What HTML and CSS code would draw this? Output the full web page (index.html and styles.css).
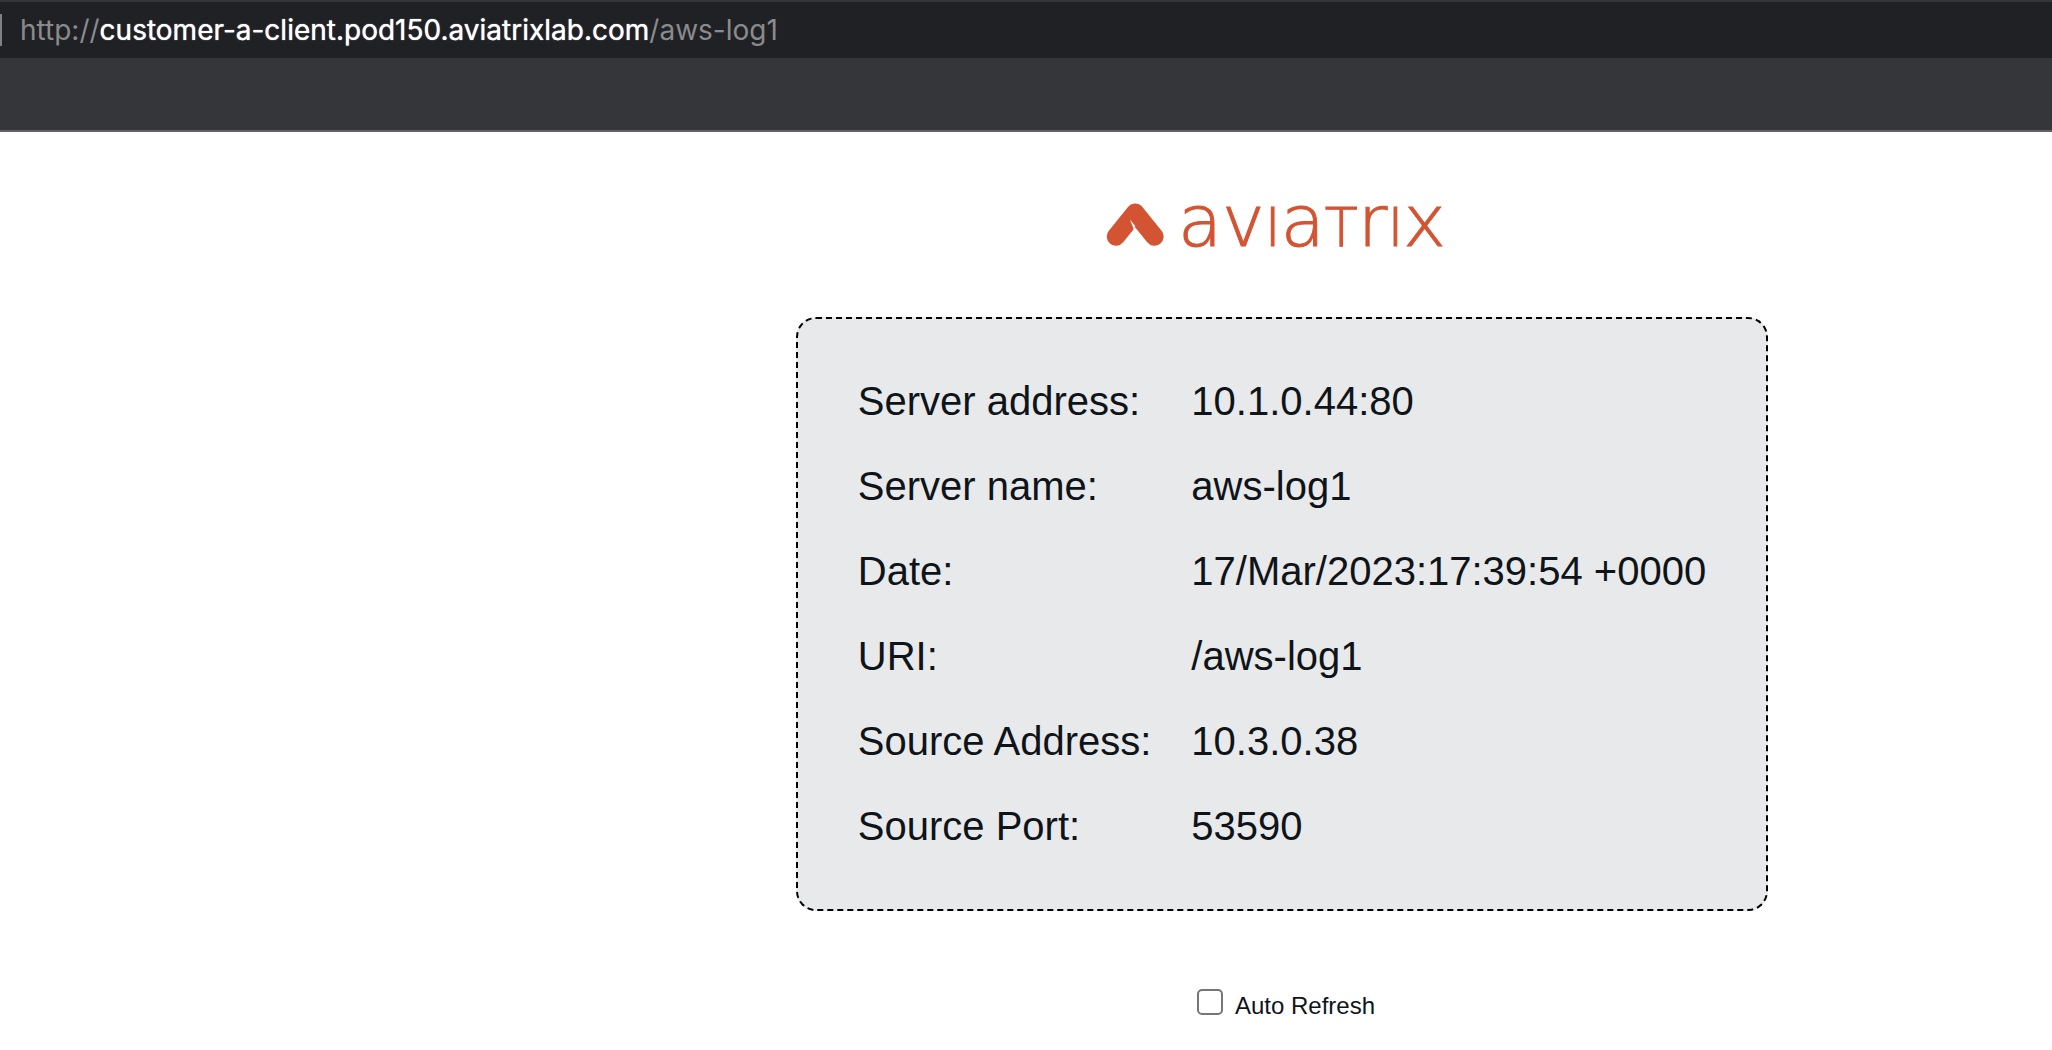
FILE: index.html
```html
<!DOCTYPE html>
<html lang="en">
<head>
  <meta charset="utf-8">
  <meta name="viewport" content="width=device-width, initial-scale=1">
  <title>aws-log1</title>
  <link rel="stylesheet" href="styles.css">
</head>
<body>
  <header class="browser">
    <div class="address-bar">
      <span class="divider"></span>
      <span class="url">http://<span class="host">customer-a-client.pod150.aviatrixlab.com</span>/aws-log1</span>
    </div>
  </header>
  <main class="page">
    <div class="logo">
      <svg class="mark" viewBox="0 0 58 44" aria-hidden="true">
        <path d="M10 34.500 29.200 10.800 48.400 34.500" fill="none" stroke="#d35433" stroke-width="18.500" stroke-linecap="round" stroke-linejoin="round"/>
        <path d="M24 17.500 L29.200 24 L28 28 Z" fill="#fff"/>
      </svg>
      <span class="wordmark">av<span class="cap">i</span>a<span class="cap">t</span>r<span class="cap">i</span>x</span>
    </div>
    <div class="info">
      <table>
        <tbody>
          <tr><th scope="row">Server address:</th><td>10.1.0.44:80</td></tr>
          <tr><th scope="row">Server name:</th><td>aws-log1</td></tr>
          <tr><th scope="row">Date:</th><td>17/Mar/2023:17:39:54 +0000</td></tr>
          <tr><th scope="row">URI:</th><td>/aws-log1</td></tr>
          <tr><th scope="row">Source Address:</th><td>10.3.0.38</td></tr>
          <tr><th scope="row">Source Port:</th><td>53590</td></tr>
        </tbody>
      </table>
    </div>
    <div class="refresh">
      <input type="checkbox" id="auto-refresh">
      <label for="auto-refresh">Auto Refresh</label>
    </div>
  </main>
</body>
</html>
```
FILE: styles.css
```css
* {
  box-sizing: border-box;
}

body {
  margin: 0;
  background: #fff;
  color: #0f1419;
  font-family: "Liberation Sans", Arial, sans-serif;
}

.browser {
  padding: 2px 0 72px;
  background: #35363a;
  border-bottom: 2px solid #626164;
}

.address-bar {
  display: flex;
  align-items: center;
  gap: 18px;
  height: 56px;
  background: #202124;
}

.divider {
  width: 2px;
  height: 32px;
  background: #808184;
}

.url {
  color: #8a8b8d;
  font: 400 28px/32px Inter, sans-serif;
  white-space: nowrap;
}

.host {
  color: #fff;
  text-shadow: 0 0 1px #fff;
}

.page {
  display: flex;
  flex-direction: column;
  align-items: center;
  padding: 56px 0 24px 512px;
}

.logo {
  display: flex;
  align-items: center;
  gap: 14px;
  width: 352px;
  height: 72px;
  color: #d35433;
}

.mark {
  width: 58px;
  height: 44px;
}

.wordmark {
  font: 200 72px/68px "DejaVu Sans Light", "DejaVu Sans", sans-serif;
  -webkit-text-stroke: 1px #d35433;
}

.cap {
  font-size: 54px;
  text-transform: uppercase;
}

.info {
  margin-top: 57px;
  padding: 40px;
  border: 2px dashed #000;
  border-radius: 20px;
  background: #e8e9eb;
}

table {
  border-collapse: collapse;
  font-size: 40px;
  line-height: 45px;
}

th,
td {
  padding: 20px;
  font-weight: 400;
  text-align: left;
  white-space: nowrap;
}

.refresh {
  display: flex;
  align-items: flex-start;
  gap: 12px;
  margin-top: 78px;
  padding-left: 8px;
  font-size: 24px;
  line-height: 34px;
}

.refresh input {
  appearance: none;
  width: 26px;
  height: 26px;
  margin: 0;
  border: 2px solid #767676;
  border-radius: 5px;
  background: #fff;
}
```
